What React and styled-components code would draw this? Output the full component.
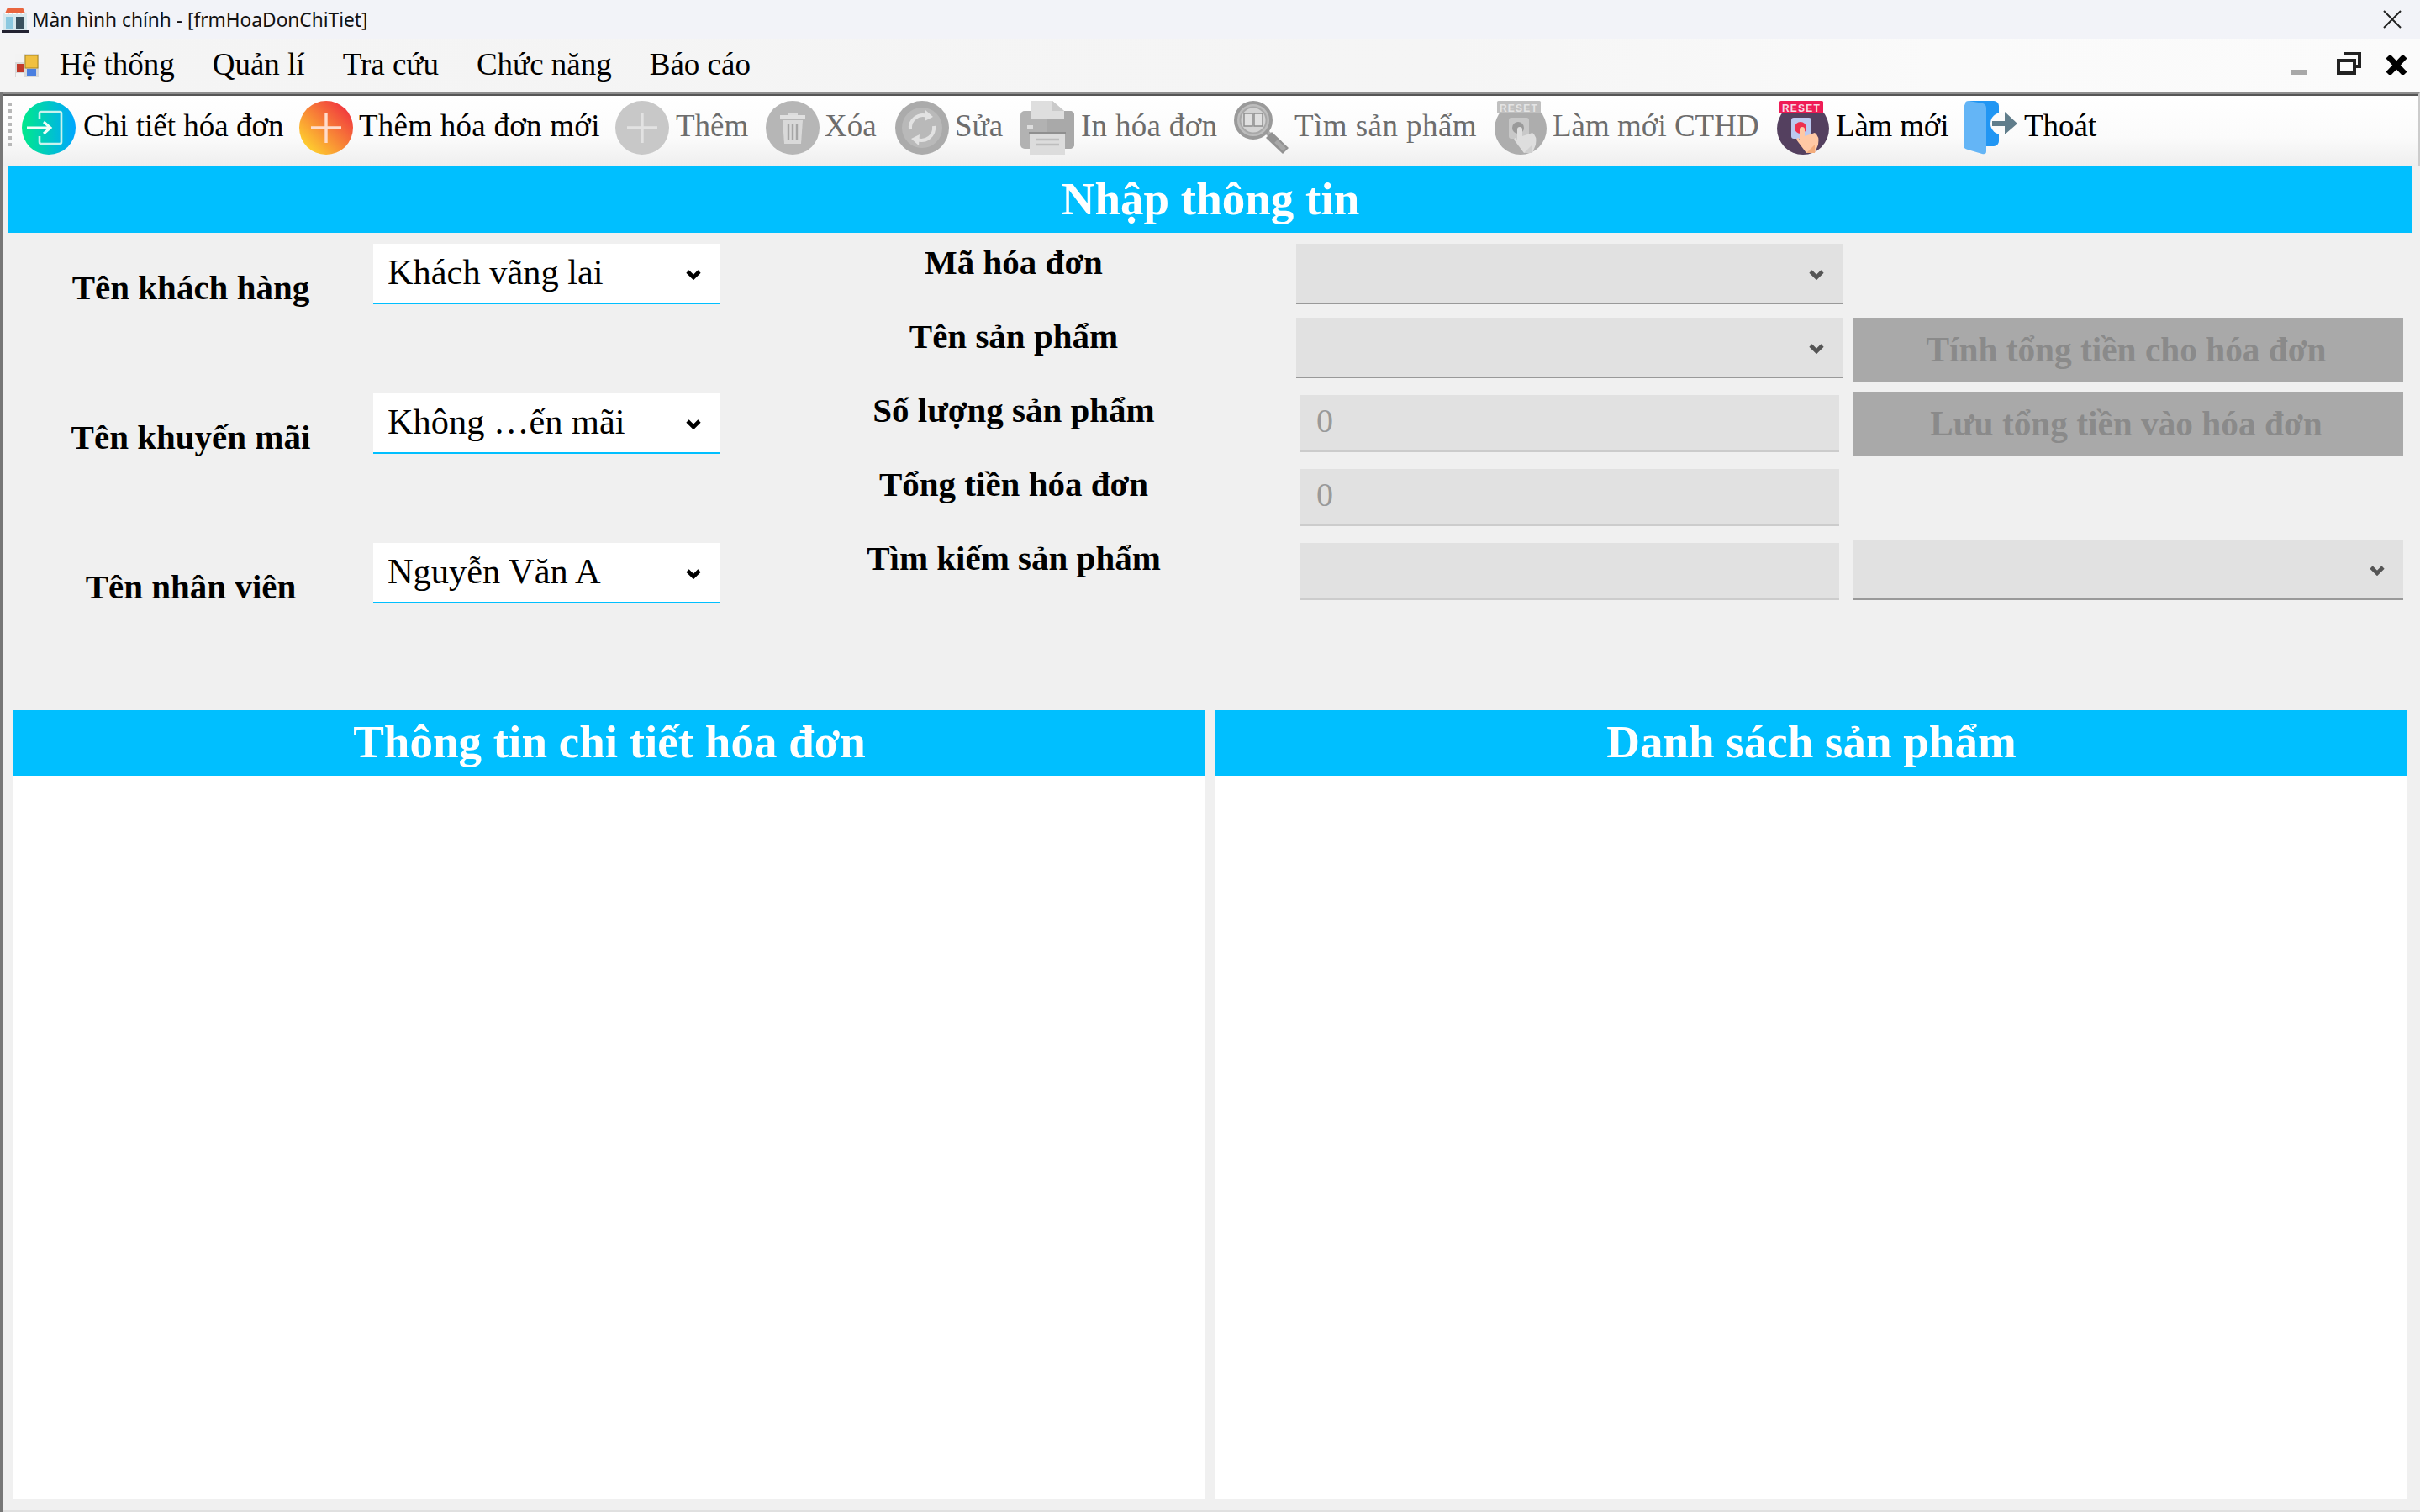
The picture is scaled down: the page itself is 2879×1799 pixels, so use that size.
import React from "react";
import styled, { createGlobalStyle } from "styled-components";

const Global = createGlobalStyle`
  html, body { margin: 0; padding: 0; background: #f0f0f0; }
  body { width: 2879px; height: 1799px; overflow: hidden; font-family: "Liberation Serif", "Times New Roman", serif; }
  #root { width: 2879px; height: 1799px; }
  * { box-sizing: border-box; }
`;

const Window = styled.div`
  width: 2879px; height: 1799px; display: flex; flex-direction: column; background: #f0f0f0; position: relative;
`;
const TitleBar = styled.div`
  height: 46px; background: #f2f3f8; display: flex; align-items: center; padding: 0 22px 0 2px; flex: none;
`;
const TitleText = styled.span`
  font-family: "Noto Sans", sans-serif; font-size: 22.7px; color: #111; margin-left: 4px; flex: 1; white-space: nowrap;
`;
const MenuBar = styled.div`
  height: 64px; flex: none; display: flex; align-items: center; padding: 0 15px 0 18px;
  background: linear-gradient(90deg, #f4f4f4 0%, #f5f5f5 60%, #fafafa 80%, #fbfbfb 100%);
`;
const MenuItems = styled.div`
  display: flex; gap: 45px; margin-left: 25px; flex: 1; font-size: 37px; color: #000; white-space: nowrap;
  position: relative; top: -2px;
`;
const WinButtons = styled.div`
  display: flex; align-items: flex-end; gap: 29px; align-self: flex-start; margin-top: 16px;
`;
const MinButton = styled.svg`
  margin-right: 6px;
`;
const Body = styled.div`
  flex: 1; display: flex; flex-direction: column; border-left: 4px solid #777; min-height: 0;
`;
const Toolbar = styled.div`
  height: 88px; flex: none; display: flex; align-items: flex-start; padding: 8px 0 0 6px;
  border-top: 2px solid #8e8e8e; box-shadow: inset 0 2px 0 #555;
  background: linear-gradient(#ffffff 0%, #fbfbfb 60%, #eeeeee 100%);
  border-right: 2px solid #ccc; font-size: 37px;
`;
const Grip = styled.div`
  width: 4px; height: 54px; margin: 2px 12px 0 0; flex: none;
  background: repeating-linear-gradient(#b8b8b8 0 4px, transparent 4px 8px);
`;
const ToolItem = styled.div`
  width: ${p => p.$w}px; flex: none; display: flex; align-items: flex-start; color: ${p => (p.$off ? "#6d6d6d" : "#000")};
  white-space: nowrap;
`;
const ToolLabel = styled.span`
  margin-left: ${p => p.$ml}px; line-height: 60px; letter-spacing: ${p => p.$ls || 0}px;
`;
const Main = styled.div`
  flex: 1; display: flex; flex-direction: column; padding: 0 5px 13px 6px; min-height: 0;
`;
const SectionBar = styled.div`
  height: 79px; flex: none; background: #00bfff; color: #fff; font-weight: 700; font-size: 55px;
  display: flex; align-items: center; justify-content: center; margin-right: 4px; padding-bottom: 2px;
`;
const Form = styled.div`
  height: 568px; flex: none; display: flex; align-items: flex-start;
`;
const LeftCol = styled.div`
  width: 846px; flex: none; display: flex; flex-direction: column; gap: 106px; padding-top: 13px;
`;
const LeftRow = styled.div`
  display: grid; grid-template-columns: 434px 412px; height: 72px;
`;
const LeftLabel = styled.div`
  font-weight: 700; font-size: 41px; line-height: 46px; color: #000; text-align: center; padding-top: 29px; white-space: nowrap;
`;
const Combo = styled.div`
  height: ${p => p.$h || 72}px; display: flex; align-items: center; justify-content: space-between; flex: none;
  background: ${p => (p.$off ? "#e1e1e1" : "#fff")};
  border-bottom: 2px solid ${p => (p.$off ? "#999" : "#00bfff")};
  padding: 2px 22px 0 18px; margin-bottom: ${p => p.$mb || 0}px; margin-top: ${p => p.$mt || 0}px;
  font-size: 42.4px; color: #000;
  & > span { position: relative; top: -3px; left: -1px; white-space: nowrap; }
`;
const MidLabels = styled.div`
  width: 672px; margin-left: 14px; flex: none; display: flex; flex-direction: column; gap: 42px; padding-top: 12px;
`;
const MidLabel = styled.div`
  font-weight: 700; font-size: 41px; line-height: 46px; text-align: center; color: #000; white-space: nowrap;
`;
const FieldCol = styled.div`
  width: 650px; flex: none; display: flex; flex-direction: column; padding-top: 13px;
`;
const TextBox = styled.div`
  height: 68px; margin-left: 4px; margin-right: 4px; flex: none; background: #e1e1e1; border-bottom: 2px solid #ccc;
  margin-bottom: 20px; padding-left: 20px; color: #999; font-size: 40px; line-height: 62px;
`;
const ActionCol = styled.div`
  width: 655px; margin-left: 12px; flex: none; display: flex; flex-direction: column; padding-top: 101px;
`;
const ActionBtn = styled.div`
  height: 76px; flex: none; background: #a9a9a9; color: #8a8a8a; font-weight: 700; font-size: 41.3px;
  display: flex; align-items: center; justify-content: center; margin-bottom: 12px; white-space: nowrap; padding-right: 4px;
`;
const Panels = styled.div`
  flex: 1; display: grid; grid-template-columns: 1418px 1418px; column-gap: 12px; padding: 0 6px; min-height: 0;
`;
const Panel = styled.div`
  display: flex; flex-direction: column; min-height: 0;
`;
const PanelHead = styled.div`
  height: 78px; flex: none; background: #00bfff; color: #fff; font-weight: 700; font-size: 55px;
  display: flex; align-items: center; justify-content: center; padding-bottom: 3px;
`;
const PanelBody = styled.div`
  flex: 1; background: #fff;
`;
const StatusEdge = styled.div`
  height: 2px; flex: none; background: #e0e0e0;
`;

const Chevron = ({ c = "#000" }) => (
  <svg width="18" height="13" viewBox="0 0 18 13"><path d="M2 3 L9 10 L16 3" fill="none" stroke={c} strokeWidth="4.6" /></svg>
);

const AppIcon = () => (
  <svg width="32" height="32" viewBox="0 0 32 32">
    <rect x="2" y="8" width="28" height="22" fill="#d7e8ee" />
    <rect x="17" y="13" width="10" height="14" fill="#39505e" />
    <rect x="5" y="13" width="9" height="14" fill="#8cc8e0" />
    <path d="M4 9 L7 2 H25 L28 9 Z" fill="#e9653f" />
    <path d="M4 9 h24" stroke="#fff" strokeWidth="2" strokeDasharray="3 2" />
    <rect x="0" y="29" width="32" height="3" fill="#223" />
  </svg>
);
const MenuIcon = () => (
  <svg width="28" height="28" viewBox="0 0 28 28">
    <rect x="0" y="0" width="28" height="28" fill="#d9d9d9" />
    <rect x="0" y="0" width="11" height="10" fill="#f3f3f3" />
    <rect x="12" y="2" width="15" height="15" fill="#f0c040" stroke="#a88622" />
    <rect x="2" y="12" width="8" height="10" fill="#c23a2a" />
    <rect x="14" y="18" width="11" height="9" fill="#4a7fe0" />
    <rect x="1" y="23" width="9" height="5" fill="#f4f4f4" />
  </svg>
);
const TitleClose = () => (
  <svg width="22" height="22" viewBox="0 0 22 22"><path d="M1 1 L21 21 M21 1 L1 21" stroke="#222" strokeWidth="2" /></svg>
);
const MinGlyph = () => <MinButton width="19" height="6"><rect width="19" height="6" fill="#a8a8a8" /></MinButton>;
const RestoreGlyph = () => (
  <svg width="29" height="27" viewBox="0 0 29 27">
    <path d="M8 2 H27 V17 H22" fill="none" stroke="#222" strokeWidth="4" />
    <rect x="2" y="10" width="19" height="15" fill="none" stroke="#222" strokeWidth="4" />
  </svg>
);
const CloseGlyph = () => (
  <svg width="26" height="23" viewBox="0 0 26 23"><path d="M3 1 L23 22 M23 1 L3 22" stroke="#000" strokeWidth="7" /></svg>
);

const EnterIcon = () => (
  <svg width="64" height="64" viewBox="0 0 64 64">
    <defs><linearGradient id="gEnter" x1="0" x2="1"><stop offset="0" stopColor="#00e98a" /><stop offset="1" stopColor="#00a6ff" /></linearGradient></defs>
    <circle cx="32" cy="32" r="32" fill="url(#gEnter)" />
    <path d="M21 22 V15 a2 2 0 0 1 2 -2 H45 a2 2 0 0 1 2 2 V49 a2 2 0 0 1 -2 2 H23 a2 2 0 0 1 -2 -2 V42" fill="none" stroke="#c9f3ee" strokeWidth="2.6" />
    <path d="M6 32 H33 M26 25 L34 32 L26 39" fill="none" stroke="#f0fff8" strokeWidth="3" />
  </svg>
);
const AddIcon = () => (
  <svg width="64" height="64" viewBox="0 0 64 64">
    <defs><linearGradient id="gAdd" x1="0" y1="1" x2="1" y2="0"><stop offset="0.1" stopColor="#ffd52e" /><stop offset="0.9" stopColor="#f0323f" /></linearGradient></defs>
    <circle cx="32" cy="32" r="32" fill="url(#gAdd)" />
    <path d="M14 32 H50 M32 14 V50" stroke="#ffdccb" strokeWidth="3.4" />
  </svg>
);
const PlusGray = () => (
  <svg width="64" height="64" viewBox="0 0 64 64">
    <circle cx="32" cy="32" r="32" fill="#c8c8c8" />
    <path d="M14 32 H50 M32 14 V50" stroke="#e2e2e2" strokeWidth="3.4" />
  </svg>
);
const TrashGray = () => (
  <svg width="64" height="64" viewBox="0 0 64 64">
    <circle cx="32" cy="32" r="32" fill="#b6b6b6" />
    <path d="M26 14 H38 V18 H26 Z" fill="#dcdcdc" />
    <rect x="17" y="17" width="30" height="4" fill="#e0e0e0" />
    <path d="M20 23 H44 L42 51 H22 Z" fill="#d9d9d9" />
    <path d="M27 27 V47 M32 27 V47 M37 27 V47" stroke="#a6a6a6" strokeWidth="2.4" />
  </svg>
);
const RefreshGray = () => (
  <svg width="64" height="64" viewBox="0 0 64 64">
    <circle cx="32" cy="32" r="32" fill="#ababab" />
    <circle cx="32" cy="32" r="24" fill="#b9b9b9" />
    <path d="M18 34 A15 15 0 0 1 38 18" fill="none" stroke="#e2e2e2" strokeWidth="4" />
    <path d="M46 30 A15 15 0 0 1 26 46" fill="none" stroke="#e2e2e2" strokeWidth="4" />
    <path d="M36 11 L45 19 L35 24 Z M28 53 L19 45 L29 40 Z" fill="#e2e2e2" />
  </svg>
);
const PrinterGray = () => (
  <svg width="64" height="64" viewBox="0 0 64 64">
    <rect x="0" y="12" width="64" height="45" rx="5" fill="#b2b2b2" />
    <rect x="32" y="12" width="32" height="45" rx="5" fill="#a9a9a9" />
    <path d="M12 0 H38 L52 12 V22 H12 Z" fill="#dedede" />
    <path d="M38 0 L52 12 H38 Z" fill="#cacaca" />
    <rect x="8" y="29" width="7" height="4" fill="#dddddd" />
    <rect x="11" y="39" width="42" height="25" fill="#dcdcdc" />
    <rect x="10" y="37" width="44" height="2" fill="#8f8f8f" />
    <path d="M18 46 H46 M18 52 H46" stroke="#bdbdbd" strokeWidth="2.4" />
  </svg>
);
const SearchGray = () => (
  <svg width="66" height="64" viewBox="0 0 66 64">
    <path d="M36 38 L40 34 L46 40 L42 44 Z" fill="#b0b0b0" />
    <path d="M45 37 L65 56 L58 63 L38 44 Z" fill="#929292" />
    <path d="M50 48 L60 58" stroke="#a8a8a8" strokeWidth="5" />
    <circle cx="23" cy="23" r="21" fill="#bdbdbd" stroke="#9a9a9a" strokeWidth="4" />
    <circle cx="23" cy="23" r="15.5" fill="#d3d3d3" stroke="#a8a8a8" strokeWidth="2" />
    <rect x="12" y="15" width="10" height="15" fill="#e0e0e0" stroke="#8e8e8e" strokeWidth="1.5" />
    <rect x="24" y="15" width="10" height="15" fill="#e0e0e0" stroke="#8e8e8e" strokeWidth="1.5" />
  </svg>
);
const ResetIcon = ({ off }) => {
  const c = off
    ? { disc: "#adadad", tag: "#c0c0c0", tagT: "#e4e4e4", pad: "#c8c8c8", btn: "#9a9a9a", hand: "#dedede", shade: "#d0d0d0" }
    : { disc: "#54405f", tag: "#ef1c56", tagT: "#f6d8e4", pad: "#bcc9f0", btn: "#ee2f4f", hand: "#ffc8a4", shade: "#f4ad7c" };
  return (
    <svg width="64" height="64" viewBox="0 0 64 64">
      <circle cx="32" cy="33" r="31" fill={c.disc} />
      <rect x="4" y="0" width="52" height="15" rx="1.5" fill={c.tag} />
      <text x="30" y="12.5" textAnchor="middle" fontFamily="Liberation Sans, sans-serif" fontWeight="700" fontSize="12" letterSpacing="1.2" fill={c.tagT}>RESET</text>
      <rect x="18" y="20" width="24" height="25" rx="3" fill={c.pad} />
      <circle cx="29" cy="32" r="7" fill={c.btn} />
      <path d="M28 34 a3 3 0 0 1 6 0 V42 L46 38 Q52 42 50 52 L46 62 H36 L30 54 L24 46 Q26 42 28 46 Z" fill={c.hand} />
      <path d="M36 62 L46 52 L46 62 Z" fill={c.shade} />
    </svg>
  );
};
const ExitIcon = () => (
  <svg width="64" height="64" viewBox="0 0 64 64">
    <path d="M6 0 H36 a6 6 0 0 1 6 6 V48 a6 6 0 0 1 -6 6 H26 V10 Z" fill="#2196f3" />
    <circle cx="45" cy="27" r="13" fill="#fbfbfb" />
    <path d="M2 3 Q2 0 6 0 L23 3 Q27 4 27 9 V60 Q27 64 22 63 L5 58 Q0 57 0 53 V8 Z" fill="#64b5f6" />
    <path d="M34 24 H49 V13 L64 27 L49 40 V30 H34 Z" fill="#607d8b" />
  </svg>
);

const tools = [
  { w: 330, ml: 9, label: "Chi tiết hóa đơn", icon: <EnterIcon /> },
  { w: 376, ml: 7, ls: 0.25, label: "Thêm hóa đơn mới", icon: <AddIcon /> },
  { w: 179, ml: 8, label: "Thêm", icon: <PlusGray />, off: true },
  { w: 154, ml: 6, label: "Xóa", icon: <TrashGray />, off: true },
  { w: 149, ml: 7, label: "Sửa", icon: <RefreshGray />, off: true },
  { w: 254, ml: 8, ls: 0.3, label: "In hóa đơn", icon: <PrinterGray />, off: true },
  { w: 309, ml: 6, ls: 0.45, label: "Tìm sản phẩm", icon: <SearchGray />, off: true },
  { w: 336, ml: 6, label: "Làm mới CTHD", icon: <ResetIcon off />, off: true },
  { w: 223, ml: 7, ls: -0.2, label: "Làm mới", icon: <ResetIcon /> },
  { w: 170, ml: 8, label: "Thoát", icon: <ExitIcon /> },
];

const left = [
  ["Tên khách hàng", "Khách vãng lai"],
  ["Tên khuyến mãi", "Không …ến mãi"],
  ["Tên nhân viên", "Nguyễn Văn A"],
];
const mid = ["Mã hóa đơn", "Tên sản phẩm", "Số lượng sản phẩm", "Tổng tiền hóa đơn", "Tìm kiếm sản phẩm"];

export default function App() {
  return (
    <Window>
      <Global />
      <TitleBar>
        <AppIcon />
        <TitleText>Màn hình chính - [frmHoaDonChiTiet]</TitleText>
        <TitleClose />
      </TitleBar>
      <MenuBar>
        <MenuIcon />
        <MenuItems>
          {["Hệ thống", "Quản lí", "Tra cứu", "Chức năng", "Báo cáo"].map(m => <span key={m}>{m}</span>)}
        </MenuItems>
        <WinButtons>
          <MinGlyph />
          <RestoreGlyph />
          <CloseGlyph />
        </WinButtons>
      </MenuBar>
      <Body>
        <Toolbar>
          <Grip />
          {tools.map(t => (
            <ToolItem key={t.label} $w={t.w} $off={t.off}>
              {t.icon}
              <ToolLabel $ml={t.ml} $ls={t.ls}>{t.label}</ToolLabel>
            </ToolItem>
          ))}
        </Toolbar>
        <Main>
          <SectionBar>Nhập thông tin</SectionBar>
          <Form>
            <LeftCol>
              {left.map(([l, v]) => (
                <LeftRow key={l}>
                  <LeftLabel>{l}</LeftLabel>
                  <Combo><span>{v}</span><Chevron /></Combo>
                </LeftRow>
              ))}
            </LeftCol>
            <MidLabels>
              {mid.map(m => <MidLabel key={m}>{m}</MidLabel>)}
            </MidLabels>
            <FieldCol>
              <Combo $off $mb={16}><span /><Chevron c="#555" /></Combo>
              <Combo $off $mb={20}><span /><Chevron c="#555" /></Combo>
              <TextBox>0</TextBox>
              <TextBox>0</TextBox>
              <TextBox />
            </FieldCol>
            <ActionCol>
              <ActionBtn>Tính tổng tiền cho hóa đơn</ActionBtn>
              <ActionBtn>Lưu tổng tiền vào hóa đơn</ActionBtn>
              <Combo $off $mt={88}><span /><Chevron c="#555" /></Combo>
            </ActionCol>
          </Form>
          <Panels>
            <Panel>
              <PanelHead>Thông tin chi tiết hóa đơn</PanelHead>
              <PanelBody />
            </Panel>
            <Panel>
              <PanelHead>Danh sách sản phẩm</PanelHead>
              <PanelBody />
            </Panel>
          </Panels>
        </Main>
        <StatusEdge />
      </Body>
    </Window>
  );
}
